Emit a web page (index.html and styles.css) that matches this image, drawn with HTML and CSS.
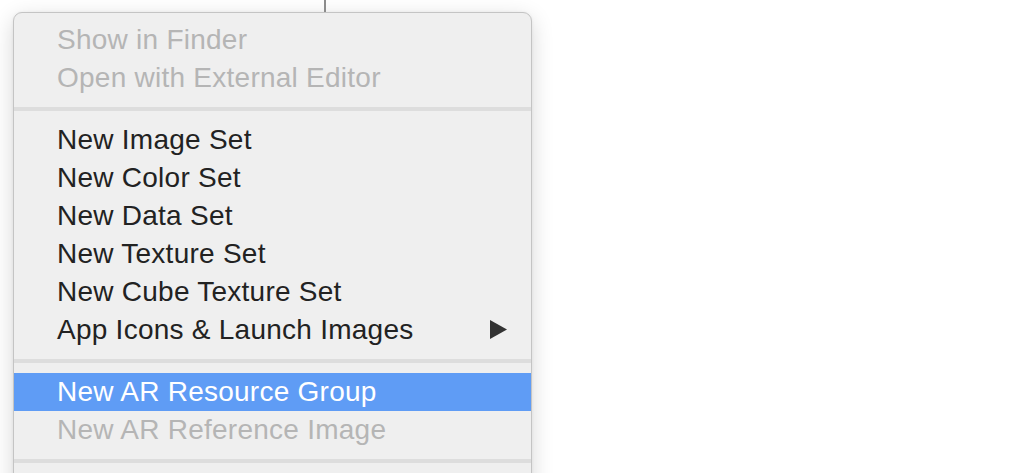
FILE: index.html
```html
<!DOCTYPE html>
<html>
<head>
<meta charset="utf-8">
<link rel="stylesheet" href="styles.css">
</head>
<body>
<div class="top">
  <div class="vline"></div>
</div>
<div class="menu">
  <div class="item disabled">Show in Finder</div>
  <div class="item disabled">Open with External Editor</div>
  <div class="sep"></div>
  <div class="item">New Image Set</div>
  <div class="item">New Color Set</div>
  <div class="item">New Data Set</div>
  <div class="item">New Texture Set</div>
  <div class="item">New Cube Texture Set</div>
  <div class="item sub"><span>App Icons &amp; Launch Images</span><svg class="arrow" width="17" height="19" viewBox="0 0 17 19"><polygon points="0,0 17,9.5 0,19" fill="#333"/></svg></div>
  <div class="sep"></div>
  <div class="item selected">New AR Resource Group</div>
  <div class="item disabled">New AR Reference Image</div>
  <div class="sep"></div>
  <div class="spacer"></div>
</div>
</body>
</html>
```
FILE: styles.css
```css
html, body {
  margin: 0;
  padding: 0;
  background: #ffffff;
  overflow: hidden;
  height: 473px;
}
body {
  font-family: "Liberation Sans", Arial, sans-serif;
}
.top {
  height: 12px;
  display: flex;
}
.vline {
  margin-left: 324px;
  width: 2px;
  height: 12px;
  background: #8c8c8c;
}
.menu {
  margin-left: 13px;
  width: 517px;
  border: 1px solid #c4c4c4;
  border-radius: 9px;
  background: #efefef;
  box-shadow: 0 6px 22px rgba(0,0,0,0.16), 0 0 3px rgba(0,0,0,0.06);
  padding-top: 8px;
}
.item {
  height: 38px;
  line-height: 38px;
  font-size: 28px;
  letter-spacing: 0.25px;
  color: #222222;
  padding-left: 43px;
  padding-right: 24px;
  display: flex;
  align-items: center;
  justify-content: space-between;
  white-space: nowrap;
}
.item.disabled {
  color: #b5b5b5;
}
.item.selected {
  background: #5f9cf5;
  color: #ffffff;
}
.arrow {
  display: block;
  margin-top: -2px;
}
.sep {
  height: 4px;
  margin: 10px 0;
  background: #dddddd;
}
.spacer {
  height: 40px;
}
```
